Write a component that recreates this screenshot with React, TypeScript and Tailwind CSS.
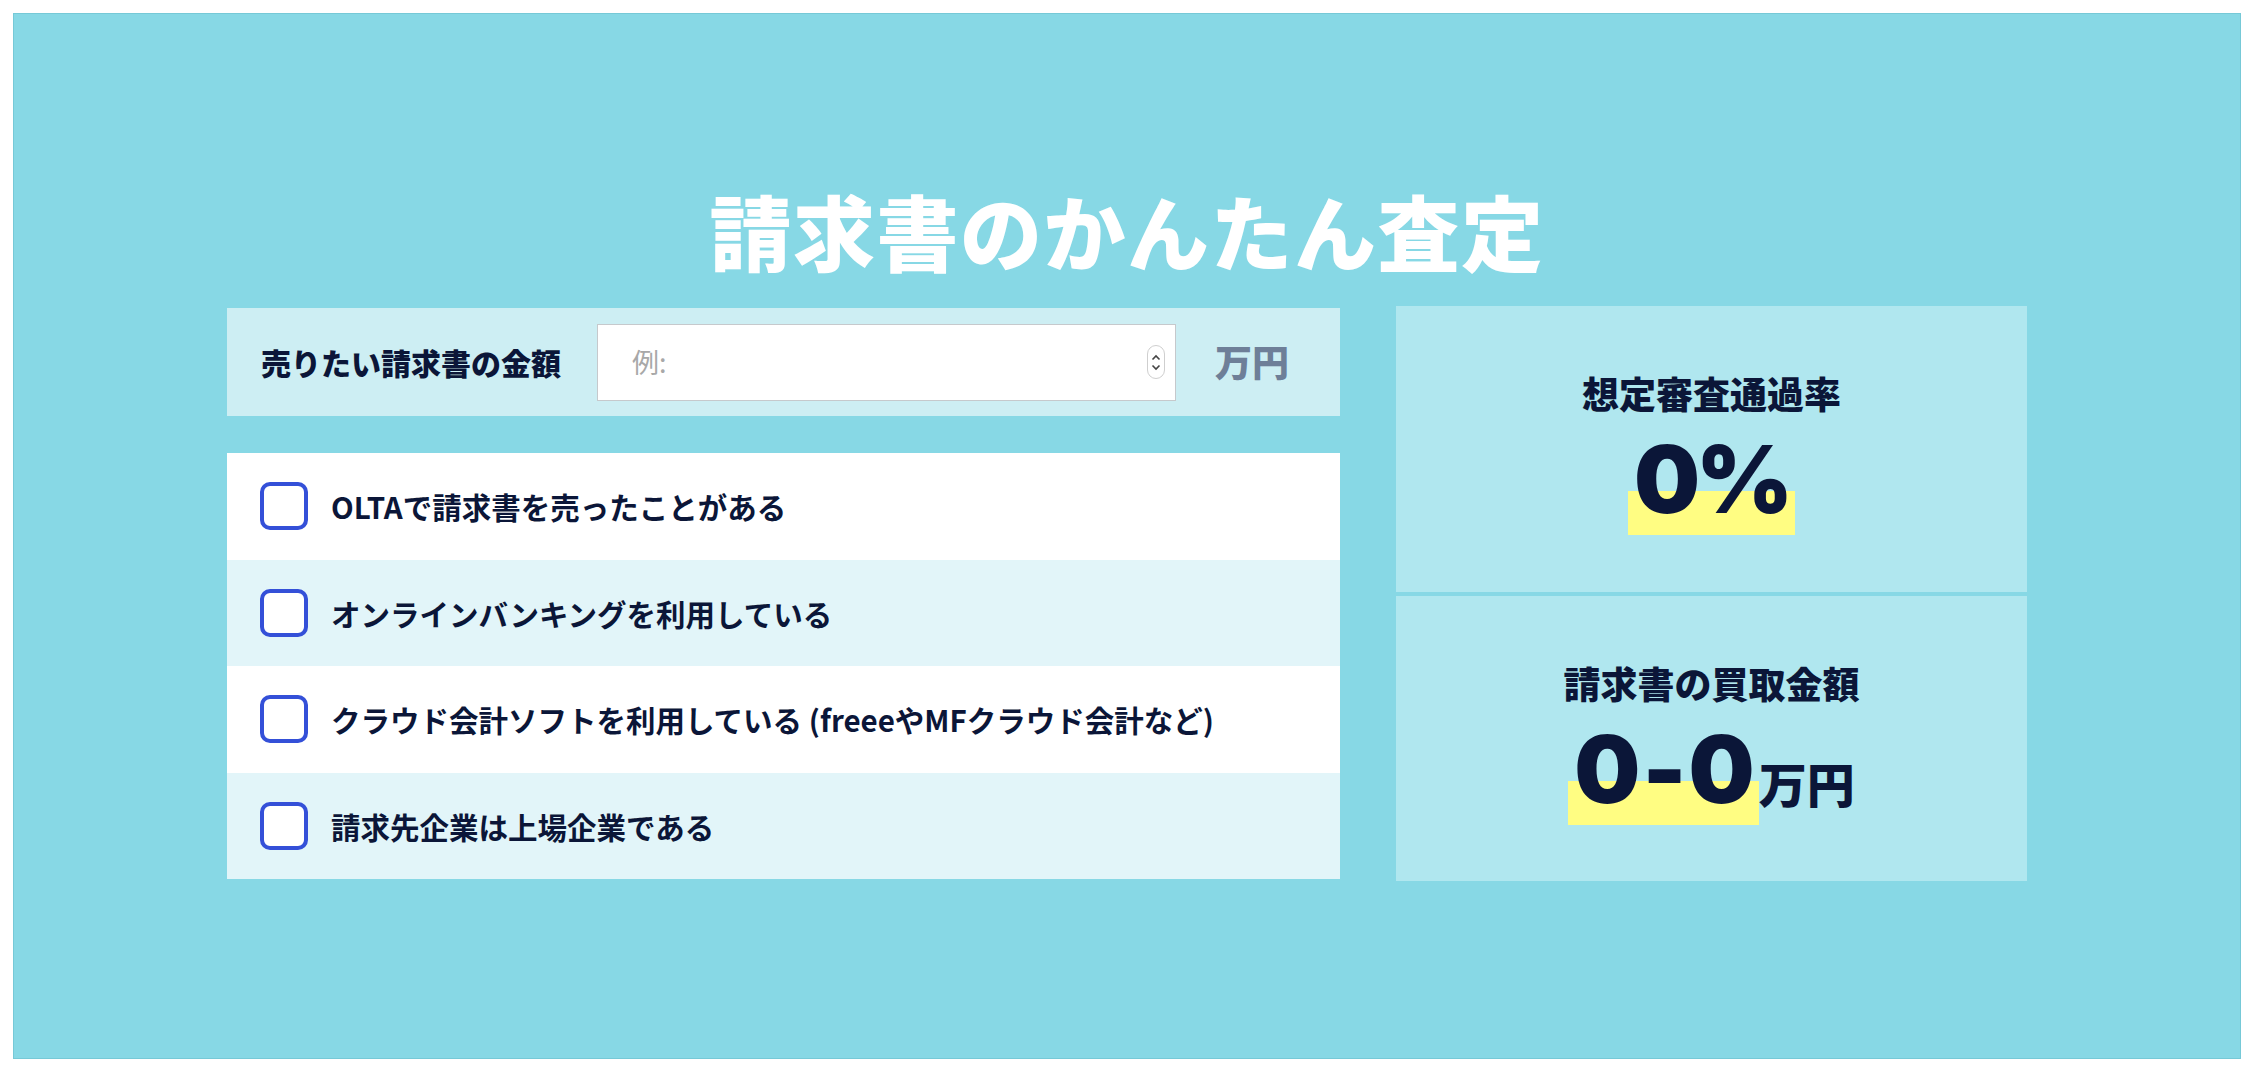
import React, { useState } from 'react';

const questions = [
  'OLTAで請求書を売ったことがある',
  'オンラインバンキングを利用している',
  'クラウド会計ソフトを利用している (freeeやMFクラウド会計など)',
  '請求先企業は上場企業である',
];

const jp = "font-['Noto_Sans_CJK_JP','Noto_Sans',sans-serif]";
const num = "font-['Inter','Noto_Sans',sans-serif]";

function Highlight({ children, wide }: { children: React.ReactNode; wide?: boolean }) {
  return (
    <span
      className={`${num} inline-block pb-[9px] text-[93px] font-black leading-none text-[#0b1638] bg-[linear-gradient(transparent_58px,#fffd82_58px)] ${wide ? 'pl-[6px] pr-[2px] tracking-[2px]' : 'px-[6px] tracking-[-4px]'}`}
    >
      {children}
    </span>
  );
}

export default function App() {
  const [amount, setAmount] = useState('');
  const [checked, setChecked] = useState<boolean[]>([false, false, false, false]);

  const toggle = (i: number) => {
    setChecked((prev) => prev.map((v, idx) => (idx === i ? !v : v)));
  };

  return (
    <div className={`${jp} min-h-screen bg-white p-[13px]`}>
      <div className="h-[1046px] border border-[#76c9d7] bg-[#87d8e5] pt-[175px]">
        <h1 className="text-center text-[82px] font-black leading-none tracking-[1.5px] text-white">
          請求書のかんたん査定
        </h1>

        <div className="mx-auto mt-[35px] flex w-[1800px] items-start justify-between">
          {/* left column */}
          <div className="mt-[2px] w-[1113px]">
            <div className="flex h-[108px] items-center bg-[#cdeef3] pl-[34px]">
              <label className="w-[336px] text-[30px] font-black text-[#0b1638]">売りたい請求書の金額</label>
              <div className="flex h-[77px] w-[579px] items-center border border-[#c6c9cc] bg-white pl-[34px] pr-[10px]">
                <input
                  type="text"
                  value={amount}
                  onChange={(e) => setAmount(e.target.value)}
                  placeholder="例:"
                  className="min-w-0 flex-1 bg-transparent text-[27px] text-[#0b1638] outline-none placeholder:text-[#a8a8a8]"
                />
                <span className="flex h-[34px] w-[18px] flex-col items-center justify-center rounded-full border border-[#cfcfcf]">
                  <svg width="10" height="7" viewBox="0 0 10 7" fill="none">
                    <path d="M1.5 5.5L5 2L8.5 5.5" stroke="#444" strokeWidth="1.6" />
                  </svg>
                  <svg width="10" height="7" viewBox="0 0 10 7" fill="none" className="mt-[3px]">
                    <path d="M1.5 1.5L5 5L8.5 1.5" stroke="#444" strokeWidth="1.6" />
                  </svg>
                </span>
              </div>
              <span className="ml-[39px] text-[37px] font-black text-[#6e7f98]">万円</span>
            </div>

            <div className="mt-[37px]">
              {questions.map((q, i) => (
                <label
                  key={q}
                  className={`flex h-[106.5px] cursor-pointer items-center pl-[33px] ${i % 2 === 0 ? 'bg-white' : 'bg-[#e2f5f9]'}`}
                >
                  <input type="checkbox" checked={checked[i]} onChange={() => toggle(i)} className="hidden" />
                  <span className="flex h-[48px] w-[48px] shrink-0 items-center justify-center rounded-[10px] border-[4px] border-[#3450d8] bg-white">
                    {checked[i] && (
                      <svg width="26" height="26" viewBox="0 0 24 24" fill="none">
                        <path d="M4 12l5 5L20 6" stroke="#3450d8" strokeWidth="3" />
                      </svg>
                    )}
                  </span>
                  <span className="ml-[23px] text-[29.5px] font-bold text-[#0b1638]">{q}</span>
                </label>
              ))}
            </div>
          </div>

          {/* right column */}
          <div className="w-[631px]">
            <div className="flex h-[286px] flex-col items-center bg-[#b0e7ef] pt-[69px]">
              <p className="text-[37px] font-black leading-none text-[#0b1638]">想定審査通過率</p>
              <div className="mt-[21px]">
                <Highlight>0%</Highlight>
              </div>
            </div>
            <div className="mt-[4px] flex h-[285px] flex-col items-center bg-[#b0e7ef] pt-[69px]">
              <p className="text-[37px] font-black leading-none text-[#0b1638]">請求書の買取金額</p>
              <div className="mt-[21px] flex items-baseline">
                <Highlight wide>0-0</Highlight>
                <span className="text-[48px] font-black text-[#0b1638]">万円</span>
              </div>
            </div>
          </div>
        </div>
      </div>
    </div>
  );
}
